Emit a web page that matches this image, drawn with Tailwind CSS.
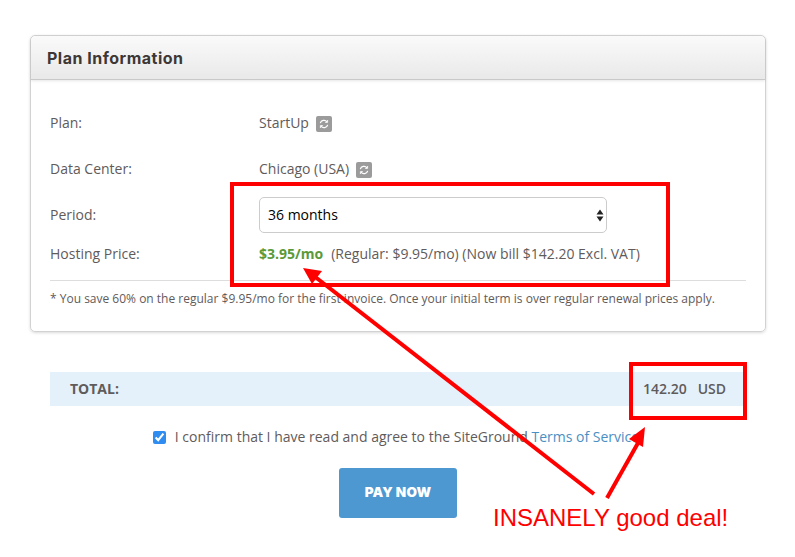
<!DOCTYPE html>
<html lang="en">
<head>
  <meta charset="UTF-8" />
  <title>Plan Information</title>
  <script src="https://cdn.jsdelivr.net/npm/@tailwindcss/browser@4"></script>
</head>
<body class="relative bg-white w-[795px] h-[557px] overflow-hidden font-['Open_Sans',sans-serif] text-[14px] text-[#5f5b5b]">
  <!-- plan card -->
  <div class="mx-[30px] mt-[35px] w-[736px] h-[297px] border border-[#d2d2d2] rounded-[5px] shadow-[0_1px_3px_rgba(0,0,0,0.15)]">
    <div class="h-[44px] flex items-center pl-[16px] border-b border-[#c9c9c9] rounded-t-[5px] bg-gradient-to-b from-[#fafafa] to-[#e9e9e9] shadow-[0_1px_3px_rgba(0,0,0,0.1)]">
      <h1 class="font-['Inter',sans-serif] font-bold text-[16px] tracking-[0.5px] text-[#3d3735]">Plan Information</h1>
    </div>
    <div class="px-[19px]">
      <div class="flex items-center h-[46px] mt-[20px] pb-[2px]">
        <div class="w-[209px]">Plan:</div>
        <div>StartUp</div>
        <span class="ml-[7px] mt-[4px] w-[16px] h-[16px] rounded-[2px] bg-[#9b9b9b] flex items-center justify-center">
          <svg width="10" height="10" viewBox="0 0 10 10" fill="none" stroke="#fff" stroke-width="1.2"><path d="M1.3 4.2A3.8 3.8 0 0 1 8 2.8M8.7 5.8A3.8 3.8 0 0 1 2 7.2"/><path d="M8.6 1v2.4H6.2M1.4 9V6.6h2.4" stroke-width="0.9"/></svg>
        </span>
      </div>
      <div class="flex items-center h-[46px] pb-[2px]">
        <div class="w-[209px]">Data Center:</div>
        <div>Chicago (USA)</div>
        <span class="ml-[7px] mt-[4px] w-[16px] h-[16px] rounded-[2px] bg-[#9b9b9b] flex items-center justify-center">
          <svg width="10" height="10" viewBox="0 0 10 10" fill="none" stroke="#fff" stroke-width="1.2"><path d="M1.3 4.2A3.8 3.8 0 0 1 8 2.8M8.7 5.8A3.8 3.8 0 0 1 2 7.2"/><path d="M8.6 1v2.4H6.2M1.4 9V6.6h2.4" stroke-width="0.9"/></svg>
        </span>
      </div>
      <div class="flex items-center h-[46px] pb-[2px]">
        <div class="w-[209px]">Period:</div>
        <div class="relative w-[348px] h-[36px] mt-[2px]">
          <select class="appearance-none w-full h-full pl-[8px] pb-[2px] border border-[#cccccc] rounded-[5px] bg-white text-black text-[14px]">
            <option>36 months</option>
          </select>
          <svg class="absolute right-[3px] top-[12px]" width="8" height="13" viewBox="0 0 8 13" fill="#222"><path d="M4 0.5 7.5 5.5H0.5ZM4 12.5 0.5 7.5H7.5Z"/></svg>
        </div>
      </div>
      <div class="flex items-center h-[32px] pb-[2px]">
        <div class="w-[209px]">Hosting Price:</div>
        <div><b class="text-[#5a9a3a] font-bold">$3.95/mo</b><span class="ml-[8px]">(Regular: $9.95/mo) (Now bill $142.20 Excl. VAT)</span></div>
      </div>
      <div class="mt-[10px] border-t border-[#dddddd] pt-[9px] text-[12px] leading-[17px]">* You save 60% on the regular $9.95/mo for the first invoice. Once your initial term is over regular renewal prices apply.</div>
    </div>
  </div>

  <!-- total -->
  <div class="mx-[50px] mt-[40px] w-[696px] h-[34px] bg-[#e4f1fb] flex items-center justify-between pl-[20px] pr-[20px] pb-[2px] font-bold">
    <span class="font-bold">TOTAL:</span>
    <span class="font-semibold">142.20 &nbsp; USD</span>
  </div>

  <label class="mt-[24px] h-[14px] flex items-center justify-center pr-[3px]">
    <input type="checkbox" checked class="w-[13px] h-[13px] accent-[#2f8cf0]" />
    <span class="ml-[9px] -mt-[2px]">I confirm that I have read and agree to the SiteGround <a class="text-[#4a8fc4]">Terms of Service</a></span>
  </label>

  <div class="mt-[24px] flex justify-center pl-[1px]">
    <button class="w-[118px] h-[50px] pb-[2px] rounded-[3px] bg-[#4d98d1] text-white font-['Inter',sans-serif] font-black text-[13.5px] tracking-[0.2px]">PAY NOW</button>
  </div>

  <!-- red annotations on top of the screenshot -->
  <svg class="absolute left-0 top-0 pointer-events-none" width="795" height="557" viewBox="0 0 795 557" fill="none" stroke="#fe0000">
    <rect x="232" y="184" width="436" height="101" stroke-width="4" />
    <rect x="631" y="364" width="114" height="54" stroke-width="4" />
    <path d="M594 494 314 276" stroke-width="4" />
    <path d="M303 268 322 271 312 284Z" fill="#fe0000" stroke="none" />
    <path d="M607 498 638 443" stroke-width="4" />
    <path d="M645 427 643 447 629 439Z" fill="#fe0000" stroke="none" />
  </svg>
  <div class="absolute left-[493px] top-[504px] font-['Liberation_Sans',sans-serif] text-[24px] leading-[28px] text-[#fe0000] whitespace-nowrap">INSANELY good deal!</div>
</body>
</html>
